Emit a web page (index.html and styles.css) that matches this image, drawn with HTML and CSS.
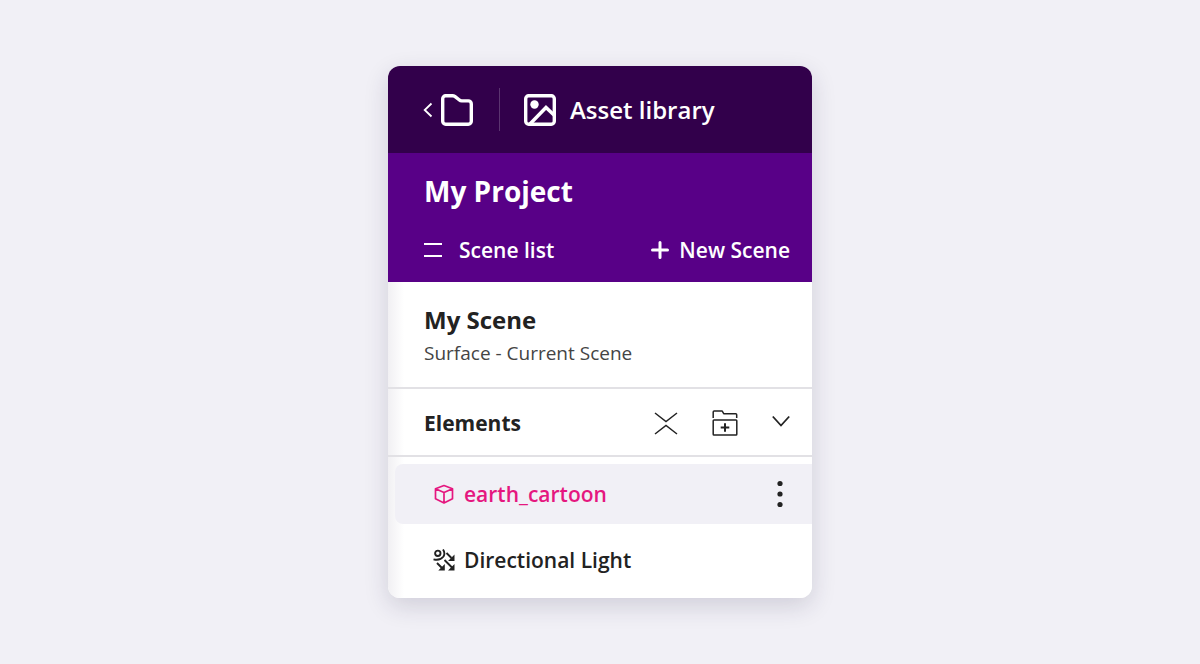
FILE: index.html
```html
<!DOCTYPE html>
<html lang="en">
<head>
    <meta charset="UTF-8">
    <meta name="viewport" content="width=device-width, initial-scale=1.0">
    <title>My Project</title>
    <link rel="stylesheet" href="styles.css">
</head>
<body>
    <main class="panel">
        <header class="topbar">
            <button class="back_btn" type="button" aria-label="Back to projects">
                <svg width="10" height="16" viewBox="0 0 10 16" fill="none" stroke="currentColor" stroke-width="1.8">
                    <path d="M8.5 1.5L1.7 8l6.8 6.5"/>
                </svg>
                <svg width="32" height="32" viewBox="0 0 32 32" fill="none" stroke="currentColor" stroke-width="3.4" stroke-linejoin="round">
                    <path d="M1.7 4.7a3 3 0 0 1 3-3h6.800q1.300 0 2.300.7l4.600 3.600q1 .9 2.300.9h6.600a3 3 0 0 1 3 3v17.400a3 3 0 0 1-3 3h-22.600a3 3 0 0 1-3-3z"/>
                </svg>
            </button>
            <button class="library_btn" type="button">
                <svg width="32" height="32" viewBox="0 0 32 32" fill="none" stroke="currentColor" stroke-width="3.4">
                    <rect x="1.7" y="1.7" width="28.6" height="28.6" rx="3"/>
                    <circle cx="10.5" cy="10.5" r="4.2" fill="currentColor" stroke="none"/>
                    <path d="M6 30L22 13.5l8.5 8"/>
                </svg>
                Asset library
            </button>
        </header>

        <section class="project">
            <h1>My Project</h1>
            <div class="project_actions">
                <button class="scene_list_btn" type="button">
                    <svg width="18" height="16" viewBox="0 0 18 16" stroke="currentColor" stroke-width="2">
                        <path d="M0 2h18M0 14h18"/>
                    </svg>
                    Scene list
                </button>
                <button class="new_scene_btn" type="button">
                    <svg width="18" height="18" viewBox="0 0 18 18" stroke="currentColor" stroke-width="3" stroke-linecap="round">
                        <path d="M9 1.5v15M1.5 9h15"/>
                    </svg>
                    New Scene
                </button>
            </div>
        </section>

        <div class="content">
            <section class="scene">
                <h2>My Scene</h2>
                <p>Surface - Current Scene</p>
            </section>

            <section class="elements_bar">
                <h3>Elements</h3>
                <button type="button" aria-label="Collapse all">
                    <svg width="24" height="24" viewBox="0 0 24 24" fill="none" stroke="currentColor" stroke-width="1.5">
                        <path d="M1 2l11 8.5L23 2M1 23l11-8.5L23 23"/>
                    </svg>
                </button>
                <button type="button" aria-label="New folder">
                    <svg width="26" height="26" viewBox="0 0 26 26" fill="none" stroke="currentColor" stroke-width="1.5" stroke-linejoin="round">
                        <path d="M1.2 8V2q0-1 1-1h8l1.500 2.700h12q1 0 1 1V8"/>
                        <rect x="1.2" y="10" width="23.6" height="15" rx=".8"/>
                        <path d="M13 13.2v8.600M8.700 17.500h8.600" stroke-width="2"/>
                    </svg>
                </button>
                <button type="button" aria-label="Toggle elements">
                    <svg width="18" height="18" viewBox="0 0 18 18" fill="none" stroke="currentColor" stroke-width="1.8">
                        <path d="M.8 2.5L9 11.500l8.200-9"/>
                    </svg>
                </button>
            </section>

            <ul class="element_list">
                <li class="element selected">
                    <button class="element_name" type="button">
                        <svg width="22" height="22" viewBox="0 0 22 22" fill="none" stroke="currentColor" stroke-width="1.7" stroke-linejoin="round">
                            <path d="M11 2.5l8.500 3.200v10L11 20l-8.500-4.300v-10zM2.500 5.700L11 9.500l8.500-3.800M11 9.500V20"/>
                        </svg>
                        earth_cartoon
                    </button>
                    <button class="more_btn" type="button" aria-label="More options">
                        <svg width="6" height="28" viewBox="0 0 6 28" fill="currentColor">
                            <circle cx="3" cy="3.5" r="2.6"/>
                            <circle cx="3" cy="14" r="2.6"/>
                            <circle cx="3" cy="24.5" r="2.6"/>
                        </svg>
                    </button>
                </li>
                <li class="element">
                    <button class="element_name" type="button">
                        <svg width="22" height="22" viewBox="0 0 22 22" fill="none" stroke="currentColor" stroke-width="1.9">
                            <circle cx="4.8" cy="4.3" r="2.7"/>
                            <path d="M10 .5Q12.500 4 10.500 7.500Q7 12 .500 10.300"/>
                            <path d="M13.500 4l5 5M11.500 11l8 8M4 14l5 5"/>
                            <path d="M21.500 5.500v6.500h-6.500zM21.500 15v6.500h-6.500zM11.800 15v6.500h-6.500z" fill="currentColor" stroke="none"/>
                        </svg>
                        Directional Light
                    </button>
                </li>
            </ul>
        </div>
    </main>
</body>
</html>
```
FILE: styles.css
```css
* {
    box-sizing: border-box;
}

body {
    margin: 0;
    min-height: 100vh;
    display: flex;
    align-items: center;
    justify-content: center;
    background-color: #f1f0f6;
    color: #222;
    font-family: "Open Sans", "Noto Sans", sans-serif;
}

h1, h2, h3, p, ul {
    margin: 0;
    padding: 0;
}

svg {
    display: block;
    flex-shrink: 0;
}

button {
    display: flex;
    align-items: center;
    padding: 0;
    border: none;
    background: none;
    color: inherit;
    font: inherit;
    cursor: pointer;
}

.panel {
    width: 100%;
    max-width: 424px;
    border-radius: 12px;
    overflow: hidden;
    background-color: #fff;
    box-shadow: 0 8px 24px rgba(40, 30, 70, 0.16);
}

/* top bar */
.topbar {
    display: flex;
    align-items: center;
    padding: 22px 35px;
    background-color: #32004b;
    color: #fff;
}

.back_btn {
    gap: 8px;
    height: 43px;
    padding-right: 26px;
    border-right: 1px solid #5b3470;
}

.library_btn {
    gap: 14px;
    padding-left: 24px;
    font-size: 24px;
    line-height: 32px;
    font-weight: 600;
}

/* project */
.project {
    padding: 20px 22px 16px 36px;
    background-color: #580087;
    color: #fff;
}

.project h1 {
    font-size: 28px;
    line-height: 36px;
    font-weight: 700;
}

.project_actions {
    display: flex;
    justify-content: space-between;
    padding-top: 25px;
    font-size: 21px;
    line-height: 32px;
    font-weight: 600;
}

.scene_list_btn {
    gap: 17px;
}

.new_scene_btn {
    gap: 10px;
}

/* scene and elements */
.content {
    background: linear-gradient(to right, #f1f0f3, #fff 16px);
}

.scene {
    padding: 20px 36px 19px;
    border-bottom: 2px solid #e2e1e5;
}

.scene h2 {
    font-size: 24px;
    line-height: 36px;
}

.scene p {
    color: #444;
    font-size: 19px;
    line-height: 30px;
}

.elements_bar {
    display: flex;
    align-items: center;
    gap: 34px;
    padding: 18px 22px 16px 36px;
    border-bottom: 2px solid #e2e1e5;
}

.elements_bar h3 {
    flex: 1;
    font-size: 21px;
    line-height: 32px;
}

.element_list {
    padding: 7px 0 8px 7px;
    list-style: none;
}

.element {
    display: flex;
    align-items: center;
    justify-content: space-between;
    height: 60px;
    margin-bottom: 6px;
    padding: 0 29px 0 38px;
    border-radius: 8px 0 0 8px;
}

.element:last-child {
    margin-bottom: 0;
}

.element_name {
    gap: 9px;
    font-size: 21px;
    line-height: 32px;
    font-weight: 600;
}

.selected {
    background-color: #f1f0f6;
}

.selected .element_name {
    color: #e5177f;
}
```
